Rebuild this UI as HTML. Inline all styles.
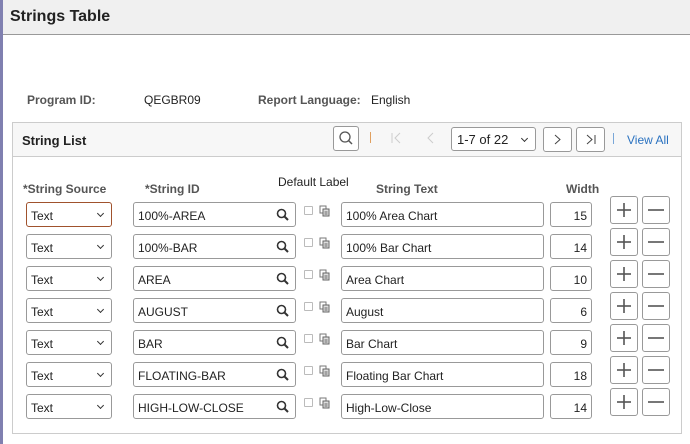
<!DOCTYPE html>
<html><head><style>
*{box-sizing:border-box;margin:0;padding:0}
body{width:690px;height:444px;background:#fff;font-family:"Liberation Sans",Arial,sans-serif;font-size:12px;color:#333;position:relative;overflow:hidden}
.a{position:absolute}
.strip{left:0;top:0;width:3px;height:444px;background:#8080b0}
.hdr{left:3px;top:0;width:687px;height:35px;background:#f0f0f0;border-bottom:1px solid #999}
.hdr span{position:absolute;left:7px;top:8px;font-size:16px;font-weight:bold;color:#222}
.lbl{color:#555;font-weight:bold;font-size:12px}
.grp{left:12px;top:122px;width:670px;height:312px;border:1px solid #ccc}
.gh{left:13px;top:123px;width:668px;height:34px;background:#f7f7f7;border-bottom:1px solid #ccc}
.box{border:1px solid #999;border-radius:3px;background:#fff;height:25px;font-size:12px;color:#222;padding:6px 4px 0;white-space:nowrap}
.sel::after{content:"";position:absolute;right:8px;top:8px;width:4px;height:4px;border-right:1px solid #333;border-bottom:1px solid #333;transform:rotate(45deg)}
.btn{border:1px solid #999;border-radius:3px;background:#fff;width:28px;height:28px}
.th{font-weight:bold;color:#555;font-size:12px}
</style></head><body>
<div class="a strip"></div>
<div class="a hdr"><span>Strings Table</span></div>
<div class="a lbl" style="left:27px;top:93px">Program ID:</div>
<div class="a" style="left:144px;top:93px;color:#222">QEGBR09</div>
<div class="a lbl" style="left:258px;top:93px">Report Language:</div>
<div class="a" style="left:371px;top:93px;color:#222">English</div>
<div class="a grp"></div>
<div class="a gh"></div>
<div class="a" style="left:22px;top:133px;font-size:13px;font-weight:bold;color:#222">String List</div>
<div class="a btn" style="left:333px;top:126px;width:26px;height:25px"><svg width="24" height="23" viewBox="0 0 24 23"><circle cx="11" cy="10" r="5" fill="none" stroke="#555" stroke-width="1.3"/><line x1="14.5" y1="13.5" x2="18" y2="17" stroke="#555" stroke-width="1.5"/></svg></div>
<div class="a" style="left:370px;top:132px;width:1px;height:11px;background:#e0a060"></div>
<svg class="a" style="left:390px;top:131px" width="14" height="14"><line x1="2" y1="2" x2="2" y2="12" stroke="#ccc"/><polyline points="10,2 5,7 10,12" fill="none" stroke="#ccc"/></svg>
<svg class="a" style="left:424px;top:131px" width="14" height="14"><polyline points="9,2 4,7 9,12" fill="none" stroke="#ccc"/></svg>
<div class="a box sel" style="left:451px;top:127px;width:85px;height:24px;font-size:13px;padding:4px 5px">1-7 of 22</div>
<div class="a btn" style="left:543px;top:127px;width:29px;height:25px"><svg width="27" height="23"><polyline points="11,7 16,11.5 11,16" fill="none" stroke="#444"/></svg></div>
<div class="a btn" style="left:576px;top:127px;width:29px;height:25px"><svg width="27" height="23"><polyline points="10,7 15,11.5 10,16" fill="none" stroke="#444"/><line x1="18" y1="7" x2="18" y2="16" stroke="#444"/></svg></div>
<div class="a" style="left:613px;top:133px;width:1px;height:11px;background:#79a7d8"></div>
<div class="a" style="left:627px;top:133px;color:#2a72c0">View All</div>
<div class="a th" style="left:23px;top:182px">*String Source</div>
<div class="a th" style="left:145px;top:182px">*String ID</div>
<div class="a" style="left:278px;top:175px;color:#222">Default Label</div>
<div class="a th" style="left:376px;top:182px">String Text</div>
<div class="a th" style="left:566px;top:182px">Width</div>
<div id="rows"></div>
<script>
var d=[["100%-AREA","100% Area Chart",15],["100%-BAR","100% Bar Chart",14],["AREA","Area Chart",10],["AUGUST","August",6],["BAR","Bar Chart",9],["FLOATING-BAR","Floating Bar Chart",18],["HIGH-LOW-CLOSE","High-Low-Close",14]];
var h="";
d.forEach(function(r,i){var y=202+32*i,b=196+32*i;
h+='<div class="a box sel" style="left:26px;top:'+y+'px;width:86px;'+(i==0?'border-color:#a0522d;':'')+'">Text</div>';
h+='<div class="a box" style="left:133px;top:'+y+'px;width:163px">'+r[0]+'<svg style="position:absolute;right:6px;top:5px" width="13" height="13" viewBox="0 0 13 13"><circle cx="5.5" cy="5.5" r="4" fill="none" stroke="#333" stroke-width="1.6"/><line x1="8.5" y1="8.5" x2="12" y2="12" stroke="#333" stroke-width="2"/></svg></div>';
h+='<div class="a" style="left:304px;top:'+(y+4)+'px;width:9px;height:9px;border:1px solid #bbb;border-radius:1px"></div>';
h+='<svg class="a" style="left:319px;top:'+(y+3)+'px" width="12" height="12" viewBox="0 0 12 12"><rect x="1" y="1" width="6" height="7" fill="#fff" stroke="#777"/><rect x="4" y="4" width="6" height="7" fill="#ddd" stroke="#666"/><line x1="5.5" y1="7" x2="8.5" y2="7" stroke="#666"/><line x1="5.5" y1="9" x2="8.5" y2="9" stroke="#666"/></svg>';
h+='<div class="a box" style="left:341px;top:'+y+'px;width:203px">'+r[1]+'</div>';
h+='<div class="a box" style="left:550px;top:'+y+'px;width:42px;text-align:right">'+r[2]+'</div>';
h+='<div class="a btn" style="left:610px;top:'+b+'px"><svg width="26" height="26"><line x1="6" y1="13" x2="20" y2="13" stroke="#555" stroke-width="1.6"/><line x1="13" y1="6" x2="13" y2="20" stroke="#555" stroke-width="1.6"/></svg></div>';
h+='<div class="a btn" style="left:642px;top:'+b+'px"><svg width="26" height="26"><line x1="5" y1="13" x2="21" y2="13" stroke="#555" stroke-width="1.6"/></svg></div>';
});
document.getElementById("rows").innerHTML=h;
</script>
</body></html>
